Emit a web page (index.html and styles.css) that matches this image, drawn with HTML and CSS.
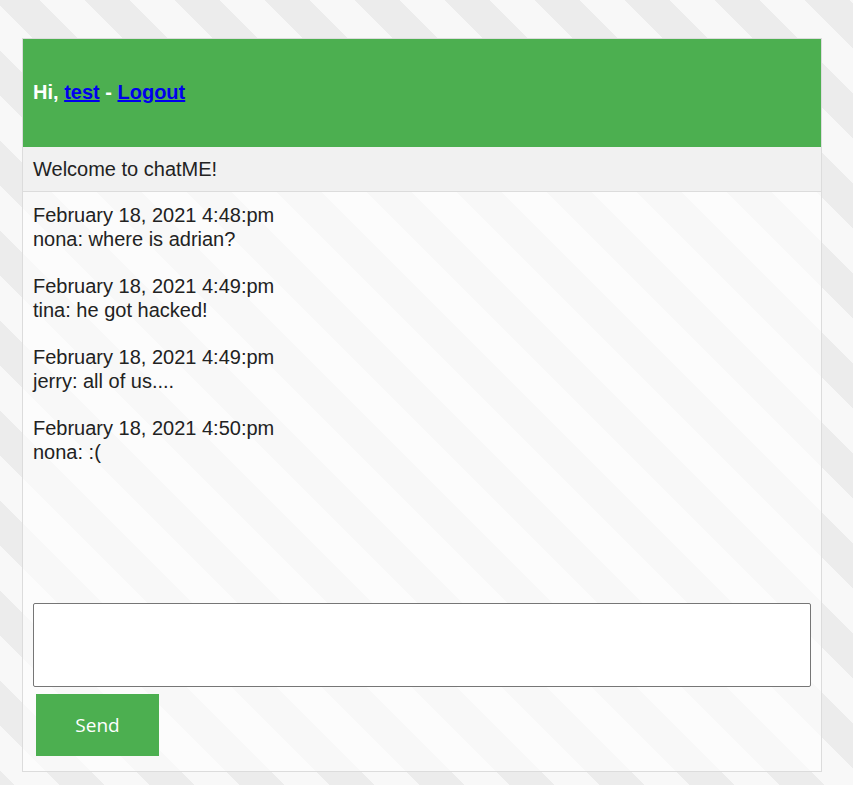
FILE: index.html
```html
<!DOCTYPE html>
<html lang="en">
<head>
<meta charset="utf-8">
<title>chatME</title>
<link rel="stylesheet" href="styles.css">
</head>
<body>
<div class="chat">
  <div class="chat-header">
    <span class="greeting">Hi, <a href="#">test</a> - <a href="#">Logout</a></span>
  </div>
  <div class="welcome">Welcome to chatME!</div>
  <div class="messages">
    <div class="message">
      <div class="stamp">February 18, 2021 4:48:pm</div>
      <div class="text">nona: where is adrian?</div>
    </div>
    <div class="message">
      <div class="stamp">February 18, 2021 4:49:pm</div>
      <div class="text">tina: he got hacked!</div>
    </div>
    <div class="message">
      <div class="stamp">February 18, 2021 4:49:pm</div>
      <div class="text">jerry: all of us....</div>
    </div>
    <div class="message">
      <div class="stamp">February 18, 2021 4:50:pm</div>
      <div class="text">nona: :(</div>
    </div>
  </div>
  <form class="compose">
    <textarea class="compose-input"></textarea>
    <button type="button" class="send-btn">Send</button>
  </form>
</div>
</body>
</html>
```

FILE: styles.css
```css
html {
  background-color: #f8f8f8;
  background-image: linear-gradient(45deg,
    #ececec 25%, #f8f8f8 25%, #f8f8f8 50%,
    #ececec 50%, #ececec 75%, #f8f8f8 75%, #f8f8f8);
  background-size: 90px 90px;
  background-position: -5px 0;
  min-height: 100%;
}

body {
  margin: 0;
  padding: 38px 0 0 22px;
  font-family: "Liberation Sans", Arial, sans-serif;
  font-size: 20px;
  color: #222;
}

.chat {
  width: 800px;
  height: 734px;
  box-sizing: border-box;
  border: 1px solid #dcdcdc;
  background: rgba(255, 255, 255, 0.62);
  display: flex;
  flex-direction: column;
}

.chat-header {
  height: 108px;
  background: #4caf50;
  display: flex;
  align-items: center;
  padding: 0 10px;
  flex-shrink: 0;
}

.greeting {
  color: #fff;
  font-weight: bold;
  font-size: 20px;
  position: relative;
  top: -1px;
}

.greeting a {
  color: #0000ee;
  text-decoration: underline;
}

.welcome {
  height: 44px;
  border-bottom: 1px solid #dcdcdc;
  background: #f1f1f1;
  display: flex;
  align-items: center;
  padding: 0 10px;
  flex-shrink: 0;
}

.messages {
  flex: 1;
  padding: 11px 10px 0;
  line-height: 24px;
  overflow: hidden;
}

.message {
  margin-bottom: 23px;
}

.compose {
  flex-shrink: 0;
  display: flex;
  flex-direction: column;
  align-items: flex-start;
  padding: 0 10px 15px;
  margin: 0;
}

.compose-input {
  width: 778px;
  height: 84px;
  box-sizing: border-box;
  border: 1px solid #767676;
  border-radius: 2px;
  background: #fff;
  margin: 0;
  padding: 2px;
  resize: none;
  font-family: "Liberation Sans", Arial, sans-serif;
}

.send-btn {
  margin: 7px 0 0 3px;
  width: 123px;
  height: 62px;
  border: none;
  background: #4caf50;
  color: #fff;
  font-family: "Open Sans", sans-serif;
  font-size: 19px;
  padding: 0;
}
```
